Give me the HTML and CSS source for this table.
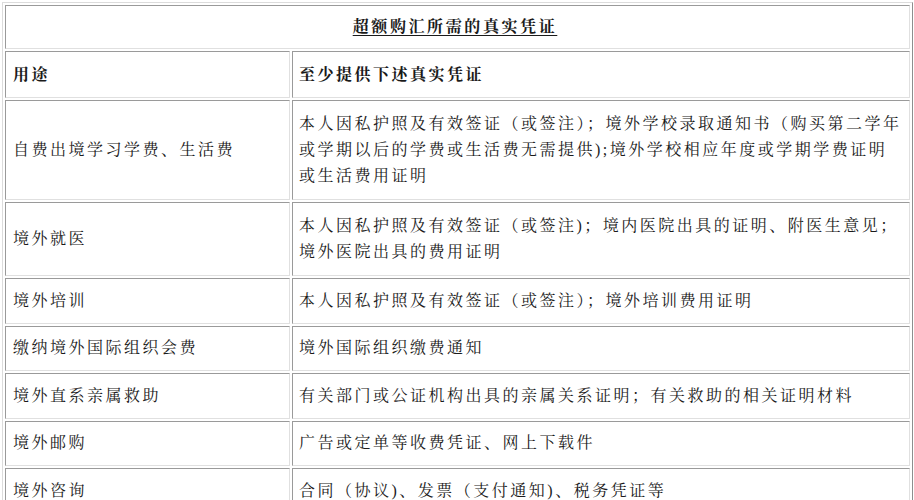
FILE: index.html
```html
<!DOCTYPE html>
<html lang="zh-CN">
<head>
<meta charset="utf-8">
<title>超额购汇所需的真实凭证</title>
<link rel="stylesheet" href="styles.css">
</head>
<body>
<table class="doc">
  <colgroup><col class="c1"><col class="c2"></colgroup>
  <tr class="r-title"><td colspan="2" class="title"><span class="ul">超额购汇所需的真实凭证</span></td></tr>
  <tr class="r-head"><td class="head">用途</td><td class="head">至少提供下述真实凭证</td></tr>
  <tr class="r-3"><td>自费出境学习学费、生活费</td><td>本人因私护照及有效签证（或签注）；境外学校录取通知书（购买第二学年<br>或学期以后的学费或生活费无需提供);境外学校相应年度或学期学费证明<br>或生活费用证明</td></tr>
  <tr class="r-2"><td>境外就医</td><td>本人因私护照及有效签证（或签注)；境内医院出具的证明、附医生意见；<br>境外医院出具的费用证明</td></tr>
  <tr class="r-1"><td>境外培训</td><td>本人因私护照及有效签证（或签注）；境外培训费用证明</td></tr>
  <tr class="r-1"><td>缴纳境外国际组织会费</td><td>境外国际组织缴费通知</td></tr>
  <tr class="r-1"><td>境外直系亲属救助</td><td>有关部门或公证机构出具的亲属关系证明；有关救助的相关证明材料</td></tr>
  <tr class="r-1"><td>境外邮购</td><td>广告或定单等收费凭证、网上下载件</td></tr>
  <tr class="r-1"><td>境外咨询</td><td>合同（协议)、发票（支付通知)、税务凭证等</td></tr>
</table>
</body>
</html>
```

FILE: styles.css
```css
html, body {
  margin: 0;
  padding: 0;
  background: #ffffff;
}
body {
  font-family: "Liberation Serif", "Noto Serif CJK SC", "Noto Sans CJK SC", serif;
  color: #1a1a1a;
  overflow: hidden;
}
.doc {
  margin: 2px 0 0 2px;
  width: 911px;
  table-layout: fixed;
  border-collapse: separate;
  border-spacing: 2px;
  border: 1px solid;
  border-color: #dcdcdc #8e8e8e #8e8e8e #dcdcdc;
  font-size: 16px;
  letter-spacing: 2.5px;
  line-height: 26px;
}
.c1 { width: 285px; }
.doc td {
  border: 1px solid;
  border-color: #9a9a9a #e0e0e0 #e0e0e0 #9a9a9a;
  padding: 0 4px 0 6px;
  vertical-align: middle;
  white-space: nowrap;
}
.doc td:first-child { padding-left: 7px; }
.r-title { height: 44px; }
.r-head { height: 47px; }
.r-3 { height: 100px; }
.r-2 { height: 74px; }
.r-1 { height: 45.5px; }
.doc td.title {
  text-align: center;
  font-weight: bold;
  letter-spacing: 2.6px;
  padding-right: 12px;
}
.ul {
  text-decoration: underline;
  text-underline-offset: 3px;
}
.doc td.head { font-weight: bold; }
```
